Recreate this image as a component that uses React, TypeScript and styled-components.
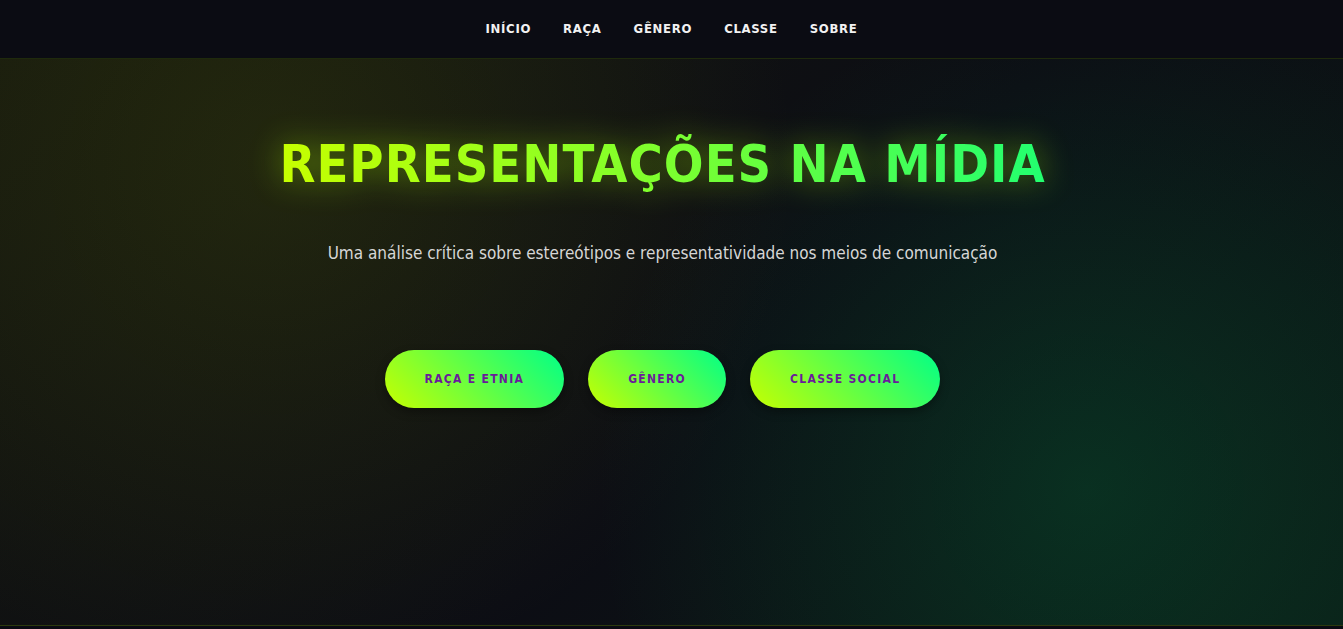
import React from "react";
import styled, { createGlobalStyle } from "styled-components";

const FONT = `"Liberation Sans Narrow", "DejaVu Sans Condensed", "Roboto Condensed", Roboto, sans-serif`;

const Global = createGlobalStyle`
  * { box-sizing: border-box; }
  html, body { margin: 0; padding: 0; background: #0a0a12; }
  body { font-family: ${FONT}; color: #fff; }
`;

const Page = styled.div`
  width: 100%;
  min-height: 629px;
  background: #0a0a12;
`;

const Nav = styled.nav`
  height: 59px;
  background: #0b0c13;
  border-bottom: 1px solid #1f2a0c;
  display: flex;
  justify-content: center;
  align-items: center;
`;

const NavList = styled.ul`
  list-style: none;
  display: flex;
  gap: 32px;
  margin: 0;
  padding: 0 0 3px 0;
`;

const NavLink = styled.a`
  font-family: ${FONT};
  font-weight: 700;
  font-size: 13px;
  letter-spacing: 0.7px;
  color: #f2f2f2;
  text-decoration: none;
  text-transform: uppercase;
`;

const Hero = styled.section`
  height: 567px;
  border-bottom: 1px solid #2c3a0e;
  background:
    radial-gradient(circle at 20% 18%, rgba(120, 140, 0, 0.16) 0%, rgba(0, 0, 0, 0) 45%),
    radial-gradient(circle at 81% 76%, rgba(0, 160, 80, 0.2) 0%, rgba(0, 0, 0, 0) 42%),
    linear-gradient(135deg, #15170f 0%, #0c0d14 55%, #0b1a16 100%);
  display: flex;
  flex-direction: column;
  align-items: center;
  padding: 70px 18px 0 0;
`;

const Title = styled.h1`
  margin: 0;
  font-family: ${FONT};
  font-weight: 700;
  font-size: 52px;
  line-height: 70px;
  letter-spacing: 1px;
  text-transform: uppercase;
  background: linear-gradient(90deg, #c6ff00 0%, #7dff2e 50%, #22ff70 100%);
  -webkit-background-clip: text;
  background-clip: text;
  -webkit-text-fill-color: transparent;
  color: transparent;
  filter: drop-shadow(0 0 16px rgba(170, 255, 0, 0.45));
`;

const Subtitle = styled.p`
  margin: 42px 0 0;
  font-family: ${FONT};
  font-size: 17px;
  line-height: 24px;
  color: #d6d6d6;
`;

const Buttons = styled.div`
  display: flex;
  gap: 24px;
  margin-top: 85px;
`;

const PillButton = styled.button`
  height: 58px;
  padding: 0 40px;
  border: none;
  border-radius: 29px;
  background: linear-gradient(45deg, #c6ff00 0%, #00ff88 100%);
  box-shadow: 0 4px 10px rgba(0, 0, 0, 0.35);
  font-family: ${FONT};
  font-weight: 700;
  font-size: 12px;
  letter-spacing: 1.3px;
  color: #6a1b9a;
  text-transform: uppercase;
  cursor: pointer;
`;

export default function App() {
  const links = ["Início", "Raça", "Gênero", "Classe", "Sobre"];
  const buttons = ["Raça e Etnia", "Gênero", "Classe Social"];
  return (
    <Page>
      <Global />
      <Nav>
        <NavList>
          {links.map((l) => (
            <li key={l}>
              <NavLink href="#">{l}</NavLink>
            </li>
          ))}
        </NavList>
      </Nav>
      <Hero>
        <Title>Representações na Mídia</Title>
        <Subtitle>
          Uma análise crítica sobre estereótipos e representatividade nos meios de comunicação
        </Subtitle>
        <Buttons>
          {buttons.map((b) => (
            <PillButton key={b}>{b}</PillButton>
          ))}
        </Buttons>
      </Hero>
    </Page>
  );
}
